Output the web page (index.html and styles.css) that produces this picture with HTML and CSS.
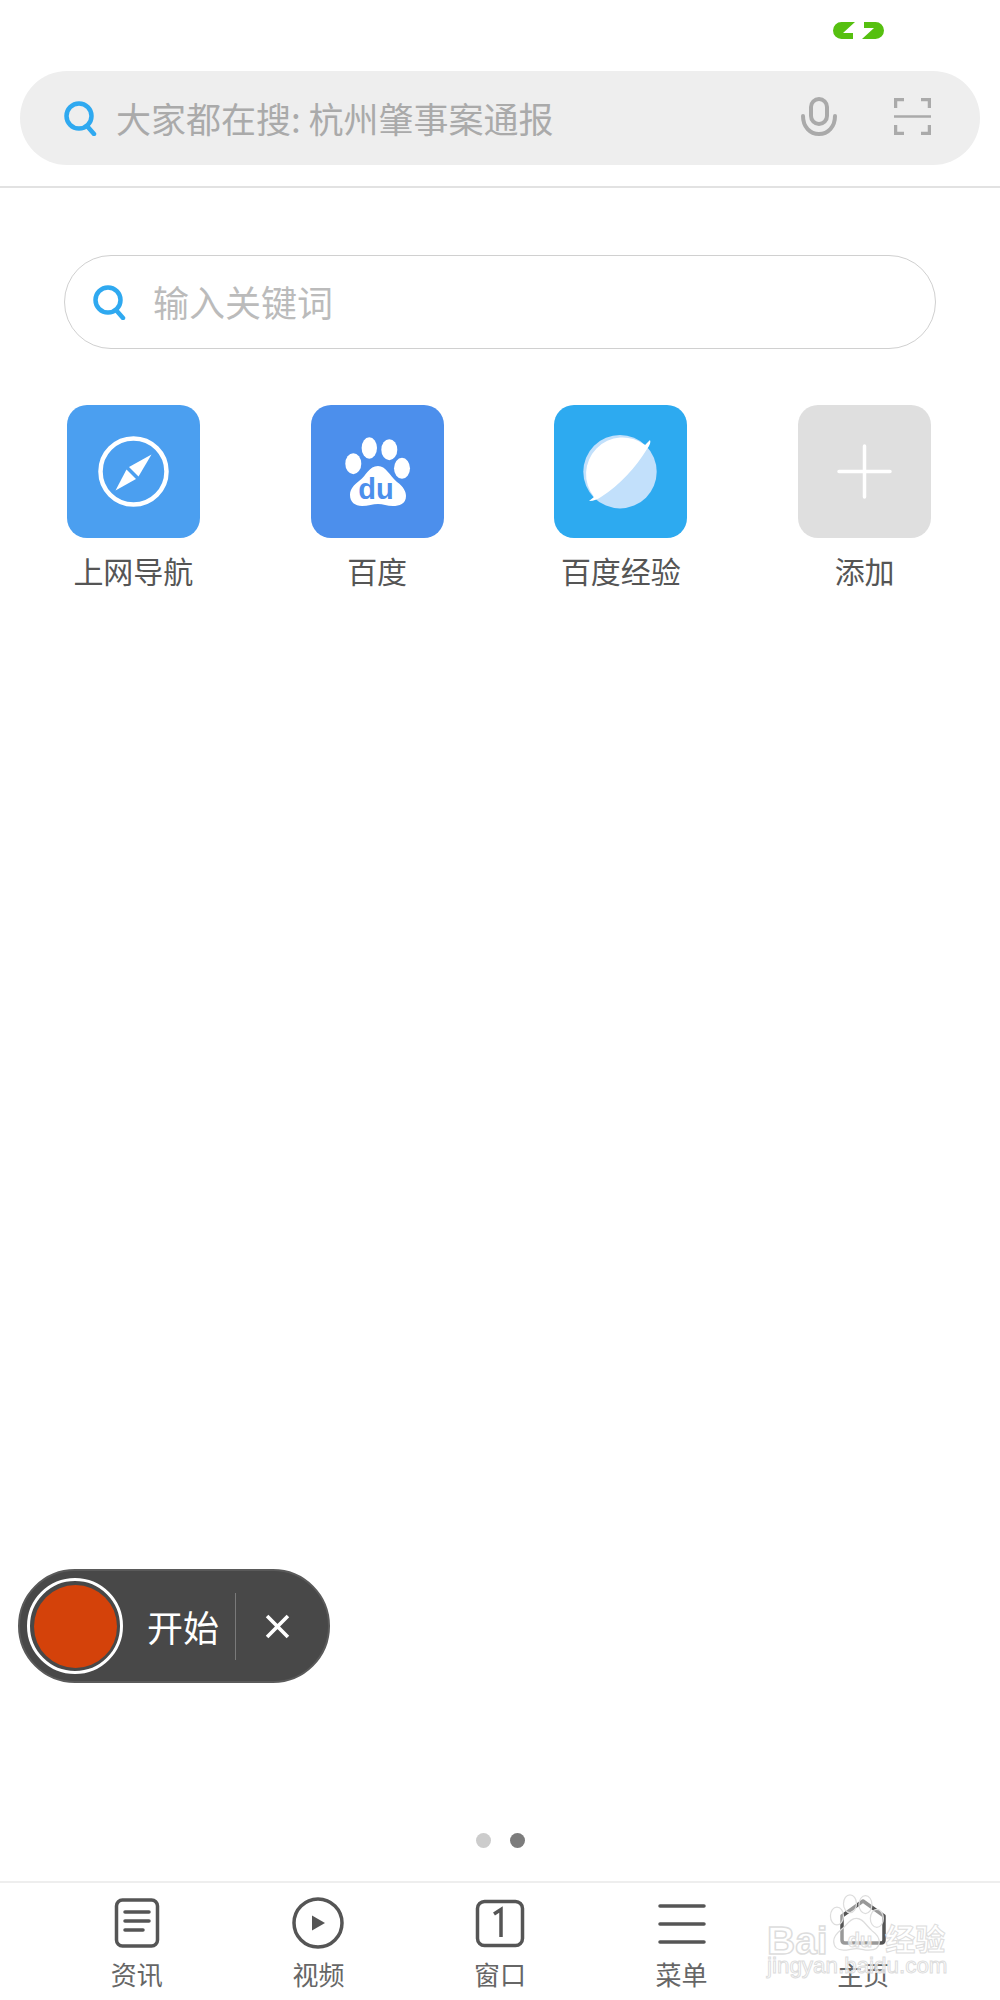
FILE: index.html
```html
<!DOCTYPE html>
<html>
<head>
  <meta charset="utf-8">
  <title>浏览器主页</title>
  <link rel="stylesheet" href="styles.css">
</head>
<body>
  <div class="page">
    <!-- Status bar -->
    <div class="status-bar">
      <svg class="status-icon" viewBox="0 0 51 17">
        <path fill="#56c010" d="M8.5 0H22L10 11H20V17H8.5A8.5 8.5 0 0 1 8.5 0Z"/>
        <path fill="#56c010" d="M31 0H42.500A8.500 8.500 0 0 1 42.500 17H29L41 6H31Z"/>
      </svg>
    </div>

    <!-- Address bar -->
    <div class="top-bar">
      <div class="address-pill">
        <svg class="search-icon" viewBox="0 0 33 35">
          <circle cx="15" cy="15" r="12.500" fill="none" stroke="#2fa9f0" stroke-width="4.500"/>
          <path d="M23 25L30 33" fill="none" stroke="#2fa9f0" stroke-width="4.500" stroke-linecap="round"/>
        </svg>
        <span class="address-text">大家都在搜: 杭州肇事案通报</span>
        <svg class="mic-icon" viewBox="0 0 36 39">
          <rect x="10" y="2" width="16" height="25" rx="8" fill="none" stroke="#aaa" stroke-width="4"/>
          <path d="M2 19C2 30 9 37 18 37S34 30 34 19" fill="none" stroke="#aaa" stroke-width="4" stroke-linecap="round"/>
        </svg>
        <svg class="scan-icon" viewBox="0 0 37 37">
          <path d="M1.500 10V1.500H10M27 1.500H35.500V10M1.500 27V35.500H10M27 35.500H35.500V27" fill="none" stroke="#aaa" stroke-width="3.500"/>
          <path d="M0 18.500H37" stroke="#aaa" stroke-width="2.500"/>
        </svg>
      </div>
    </div>

    <div class="main">
      <!-- Search box -->
      <div class="search-box">
        <svg class="search-icon" viewBox="0 0 33 35">
          <circle cx="15" cy="15" r="12.500" fill="none" stroke="#2fa9f0" stroke-width="4.500"/>
          <path d="M23 25L30 33" fill="none" stroke="#2fa9f0" stroke-width="4.500" stroke-linecap="round"/>
        </svg>
        <span class="search-text">输入关键词</span>
      </div>

      <!-- Shortcuts -->
      <div class="shortcuts">
        <div class="shortcut">
          <svg class="tile tile-nav" viewBox="0 0 133 133">
            <circle cx="66.500" cy="66.500" r="33" fill="none" stroke="#fff" stroke-width="4.500"/>
            <path fill="#fff" d="M84.500 49.500L62 62L71.500 71.500Z"/>
            <path fill="#fff" d="M48.500 85.500L59.500 64.500L69 74Z"/>
          </svg>
          <span class="shortcut-label">上网导航</span>
        </div>
        <div class="shortcut">
          <svg class="tile tile-baidu" viewBox="0 0 133 133">
            <ellipse cx="42.300" cy="58.700" rx="8" ry="10.500" fill="#fff"/>
            <ellipse cx="58.300" cy="43" rx="7.700" ry="10.700" fill="#fff"/>
            <ellipse cx="78.300" cy="44.700" rx="8" ry="10.500" fill="#fff"/>
            <ellipse cx="91" cy="63.300" rx="8" ry="10.500" fill="#fff"/>
            <path fill="#fff" d="M67 61C75 61 78 70 86 77C93 82 95 87 95 91C95 99 88 101 82 101C76 101 72 99 67 99C62 99 57 101 51 101C44 101 39 97 39 90C39 84 43 80 48 76C56 70 58 61 67 61Z"/>
            <text class="du-text" x="65" y="94">du</text>
          </svg>
          <span class="shortcut-label">百度</span>
        </div>
        <div class="shortcut">
          <svg class="tile tile-jingyan" viewBox="0 0 133 133">
            <circle cx="66" cy="66.700" r="36.700" fill="#c2e0fb"/>
            <path fill="#fff" d="M91 40A36.700 36.700 0 0 0 40 92L35 96C40 96 44 94 47 92C66 80 82 62 93 44C96 40 97 37 96 35Z"/>
          </svg>
          <span class="shortcut-label">百度经验</span>
        </div>
        <div class="shortcut">
          <svg class="tile tile-add" viewBox="0 0 133 133">
            <path d="M41 66.500H92M66.500 41V92" fill="none" stroke="#fff" stroke-width="3.500" stroke-linecap="round"/>
          </svg>
          <span class="shortcut-label">添加</span>
        </div>
      </div>

      <!-- Pager dots -->
      <div class="pager">
        <span class="dot"></span>
        <span class="dot dot-active"></span>
      </div>
    </div>

    <!-- Bottom nav -->
    <div class="bottom-nav">
      <div class="nav-item">
        <svg class="nav-icon" viewBox="0 0 52 52">
          <rect x="5.500" y="3" width="41" height="46" rx="6" fill="none" stroke="#555" stroke-width="3.500"/>
          <path d="M14 15H38M14 24H38M14 33H32" fill="none" stroke="#555" stroke-width="3.500" stroke-linecap="round"/>
        </svg>
        <span class="nav-label">资讯</span>
      </div>
      <div class="nav-item">
        <svg class="nav-icon" viewBox="0 0 52 52">
          <circle cx="26" cy="26" r="24" fill="none" stroke="#555" stroke-width="3.500"/>
          <path fill="#555" d="M20 18.500L33 26L20 33.500Z"/>
        </svg>
        <span class="nav-label">视频</span>
      </div>
      <div class="nav-item">
        <svg class="nav-icon" viewBox="0 0 52 52">
          <rect x="3.500" y="4.500" width="45" height="44" rx="7" fill="none" stroke="#555" stroke-width="3.500"/>
          <path d="M20 17L27 12.500V40" fill="none" stroke="#555" stroke-width="3.500"/>
        </svg>
        <span class="nav-label">窗口</span>
      </div>
      <div class="nav-item">
        <svg class="nav-icon" viewBox="0 0 52 52">
          <path d="M4 9H48M4 27H48M4 45H48" fill="none" stroke="#555" stroke-width="3.500" stroke-linecap="round"/>
        </svg>
        <span class="nav-label">菜单</span>
      </div>
      <div class="nav-item">
        <svg class="nav-icon" viewBox="0 0 52 52">
          <path d="M26 4L47 19V43C47 45 46 46 44 46H8C6 46 5 45 5 43V19Z" fill="none" stroke="#555" stroke-width="3.500" stroke-linejoin="round"/>
        </svg>
        <span class="nav-label">主页</span>
      </div>
    </div>

    <!-- Floating recorder -->
    <div class="recorder">
      <div class="record-ring"><div class="record-btn"></div></div>
      <span class="record-text">开始</span>
      <span class="record-divider"></span>
      <svg class="record-close" viewBox="0 0 24 24">
        <path d="M2 2L22 22M22 2L2 22" fill="none" stroke="#fff" stroke-width="3.500"/>
      </svg>
    </div>

    <!-- Watermark -->
    <div class="watermark">
      <svg class="watermark-paw" viewBox="0 0 70 70">
        <ellipse cx="11" cy="27" rx="8" ry="11" fill="rgba(255,255,255,.4)" stroke="#ddd" stroke-width="1.500"/>
        <ellipse cx="27" cy="12" rx="8" ry="11" fill="rgba(255,255,255,.4)" stroke="#ddd" stroke-width="1.500"/>
        <ellipse cx="46" cy="13" rx="8" ry="11" fill="rgba(255,255,255,.4)" stroke="#ddd" stroke-width="1.500"/>
        <ellipse cx="60" cy="30" rx="8" ry="11" fill="rgba(255,255,255,.4)" stroke="#ddd" stroke-width="1.500"/>
        <path fill="rgba(255,255,255,.4)" stroke="#ddd" stroke-width="1.500" d="M35 30C43 30 46 38 54 45C61 50 63 55 63 59C63 67 56 69 50 69C44 69 40 67 35 67C30 67 25 69 19 69C12 69 7 65 7 58C7 52 11 48 16 44C24 38 26 30 35 30Z"/>
      </svg>
      <div class="watermark-brand"><span>Bai</span><span class="watermark-du">du</span><span class="watermark-cn">经验</span></div>
      <div class="watermark-url">jingyan.baidu.com</div>
    </div>
  </div>
</body>
</html>
```

FILE: styles.css
```css
* {
  box-sizing: border-box;
}
body {
  margin: 0;
  background-color: #fff;
  font-family: "Noto Sans CJK SC", "Liberation Sans", sans-serif;
}
svg {
  display: block;
  flex: none;
}
.page {
  position: relative;
  display: flex;
  flex-direction: column;
  width: 1000px;
  height: 2000px;
  overflow: hidden;
}

/* status bar */
.status-bar {
  display: flex;
  justify-content: flex-end;
  height: 71px;
  padding: 22px 116px 0 0;
}
.status-icon {
  width: 51px;
  height: 17px;
}

/* address bar */
.top-bar {
  height: 117px;
  padding: 0 20px;
  border-bottom: 2px solid #e2e2e2;
}
.address-pill {
  display: flex;
  align-items: center;
  height: 94px;
  padding: 0 49px 0 44px;
  background-color: #eee;
  border-radius: 47px;
}
.search-icon {
  width: 33px;
  height: 35px;
}
.address-text {
  flex: 1;
  margin: 0 0 2px 19px;
  font-size: 35px;
  color: #aaa;
  white-space: nowrap;
}
.mic-icon {
  width: 36px;
  height: 39px;
  margin-right: 57px;
  margin-top: -3px;
}
.scan-icon {
  width: 37px;
  height: 37px;
  margin-top: -3px;
}

/* main area */
.main {
  display: flex;
  flex-direction: column;
  flex: 1;
  padding-top: 67px;
}
.search-box {
  display: flex;
  align-items: center;
  height: 94px;
  margin: 0 64px;
  padding: 0 28px;
  border: 1.500px solid #d0d0d0;
  border-radius: 47px;
}
.search-text {
  margin: 0 0 2px 27px;
  font-size: 36px;
  color: #bbb;
}
.shortcuts {
  display: grid;
  grid-template-columns: repeat(4, 1fr);
  margin: 56px 13.500px 0 11.500px;
}
.shortcut {
  display: flex;
  flex-direction: column;
  align-items: center;
}
.tile {
  width: 133px;
  height: 133px;
  border-radius: 20px;
}
.tile-nav {
  background-color: #4b9ff0;
}
.tile-baidu {
  background-color: #4c8fec;
}
.tile-jingyan {
  background-color: #2daaf0;
}
.tile-add {
  background-color: #dfdfdf;
}
.du-text {
  font-family: "Liberation Sans", sans-serif;
  font-size: 29px;
  font-weight: 700;
  text-anchor: middle;
  fill: #4c8fec;
}
.shortcut-label {
  margin-top: 10px;
  font-size: 30px;
  line-height: 44px;
  color: #555;
}
.pager {
  display: flex;
  justify-content: center;
  gap: 19px;
  margin-top: auto;
  margin-bottom: 33px;
}
.dot {
  width: 15px;
  height: 15px;
  border-radius: 50%;
  background-color: #ccc;
}
.dot-active {
  background-color: #7c7c7c;
}

/* bottom nav */
.bottom-nav {
  display: grid;
  grid-template-columns: repeat(5, 1fr);
  height: 119px;
  padding: 14px 46px 0;
  border-top: 2px solid #eee;
}
.nav-item {
  display: flex;
  flex-direction: column;
  align-items: center;
}
.nav-icon {
  width: 52px;
  height: 52px;
}
.nav-label {
  margin-top: 6px;
  font-size: 26px;
  line-height: 38px;
  color: #666;
}

/* floating recorder */
.recorder {
  position: absolute;
  left: 18px;
  top: 1569px;
  display: flex;
  align-items: center;
  width: 312px;
  height: 114px;
  padding-left: 7px;
  background-color: #484848;
  border: 2px solid #5a5a5a;
  border-radius: 57px;
}
.record-ring {
  display: flex;
  align-items: center;
  justify-content: center;
  width: 96px;
  height: 96px;
  border: 3px solid #fff;
  border-radius: 50%;
}
.record-btn {
  width: 83px;
  height: 83px;
  border-radius: 50%;
  background-color: #d4420a;
}
.record-text {
  margin-left: 24px;
  font-size: 36px;
  color: #fff;
  white-space: nowrap;
}
.record-divider {
  width: 1px;
  height: 67px;
  margin-left: 16px;
  background-color: #7a7a7a;
}
.record-close {
  width: 25px;
  height: 25px;
  margin-left: 29px;
}

/* watermark over the nav */
.watermark {
  position: absolute;
  left: 767px;
  top: 1893px;
  width: 190px;
  height: 90px;
  color: rgba(255, 255, 255, .65);
}
.watermark-paw {
  position: absolute;
  left: 61px;
  top: 0;
  width: 57px;
  height: 59px;
}
.watermark-brand {
  position: absolute;
  left: 0;
  top: 19px;
  font-family: "Liberation Sans", sans-serif;
  font-size: 39px;
  line-height: 50px;
  font-weight: 700;
  white-space: nowrap;
  -webkit-text-stroke: 1.500px #ddd;
}
.watermark-du {
  margin-left: 20px;
  font-size: 20px;
  vertical-align: 7px;
  -webkit-text-stroke: 1px #ddd;
}
.watermark-cn {
  margin-left: 13px;
  font-family: "Noto Sans CJK SC", sans-serif;
  font-size: 30px;
  vertical-align: 4px;
  -webkit-text-stroke: 1px #ddd;
}
.watermark-url {
  position: absolute;
  left: 0;
  top: 58px;
  font-family: "Liberation Sans", sans-serif;
  font-size: 22.400px;
  line-height: 30px;
  white-space: nowrap;
  -webkit-text-stroke: 1px #ddd;
}
```
